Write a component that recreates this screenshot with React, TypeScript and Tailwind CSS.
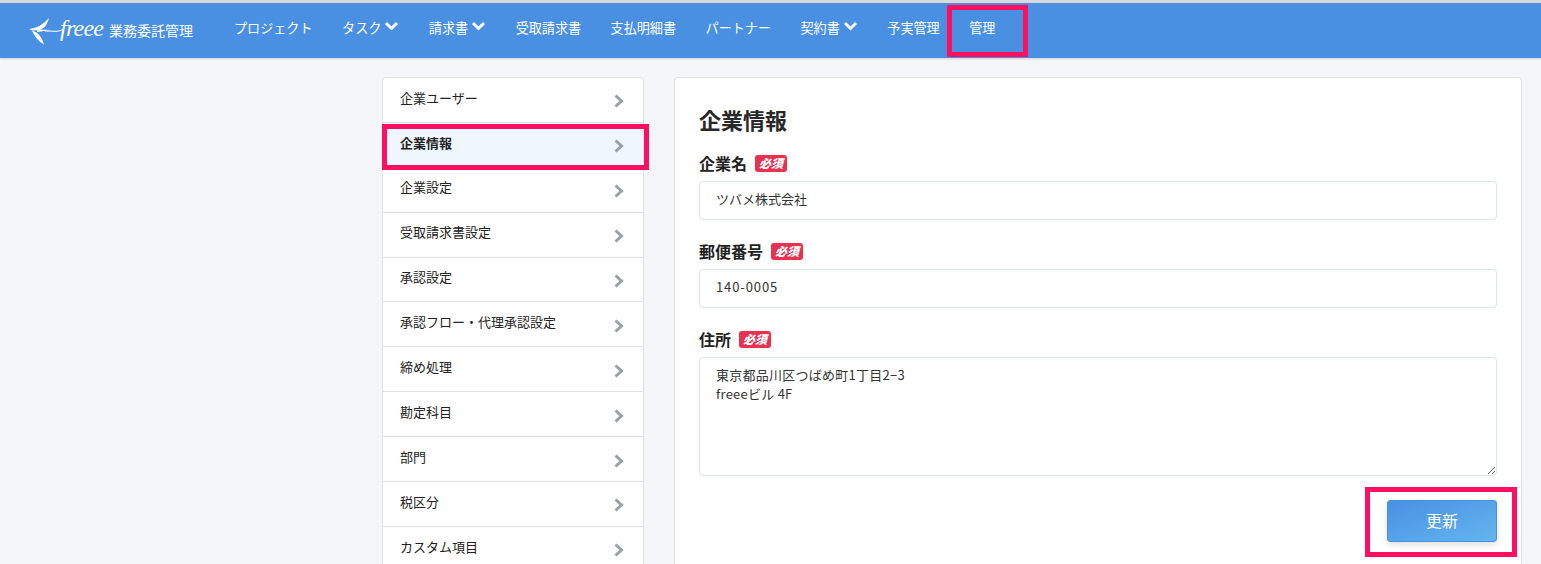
const font = { fontFamily: '"Noto Sans CJK JP", "Noto Sans", sans-serif' };

function Caret() {
  return (
    <svg width="15" height="10" viewBox="0 0 15 10" className="ml-[3px] mt-[-3px]">
      <path d="M2 2 L7.500 7.500 L13 2" fill="none" stroke="white" strokeWidth="3" />
    </svg>
  );
}

function Chevron() {
  return (
    <svg width="10" height="14" viewBox="0 0 10 14" className="mt-[3px]">
      <path d="M1.500 1.500 L7.500 7 L1.500 12.500" fill="none" stroke="#9aa0a6" strokeWidth="3" />
    </svg>
  );
}

function Logo() {
  return (
    <div className="flex items-center">
      <svg width="80" height="32" viewBox="0 0 80 32" className="block">
        <path d="M0 14 Q12 12.500 20 3 Q18 12 11 15 L3 15.500 Z" fill="white" />
        <path d="M3 15.500 Q12 18 15 29.500 Q7 25 3 15.500 Z" fill="white" />
        <path d="M8 14.500 L22 15 L8 17 Z" fill="white" />
        <path d="M16 16 L28 16.300 Q32 16.200 35 13.500" stroke="white" strokeWidth="1" fill="none" />
        <text x="31" y="20.500" fill="white" fontSize="24" fontStyle="italic" textLength="44" fontFamily="'Liberation Serif', serif">freee</text>
      </svg>
      <span className="text-[14px] text-white">業務委託管理</span>
    </div>
  );
}

function NavItem({ label, caret }: { label: string; caret?: boolean }) {
  return (
    <span className="flex items-center text-[13.100px] text-white whitespace-nowrap">
      {label}
      {caret && <Caret />}
    </span>
  );
}

function Required() {
  return (
    <span className="ml-[8px] inline-flex h-[17px] w-[32px] items-center justify-center rounded-[3px] bg-[#e8304f] text-[12px] font-black italic leading-none text-white">
      必須
    </span>
  );
}

const sideItems = ["企業ユーザー", "企業情報", "企業設定", "受取請求書設定", "承認設定", "承認フロー・代理承認設定", "締め処理", "勘定科目", "部門", "税区分", "カスタム項目"];

export default function App() {
  return (
    <div className="relative h-screen overflow-hidden bg-[#f5f6fa] text-[#222]" style={font}>
      <div className="h-[3px] bg-[#d9d9d9]" />
      <header className="flex h-[55px] items-center bg-[#4a90e2] pl-[29px] shadow-[0_1px_2px_rgba(0,0,0,0.15)]">
        <Logo />
        <nav className="ml-[41px] mt-[-5px] flex items-center gap-[29.500px]">
          <NavItem label="プロジェクト" />
          <NavItem label="タスク" caret />
          <NavItem label="請求書" caret />
          <NavItem label="受取請求書" />
          <NavItem label="支払明細書" />
          <NavItem label="パートナー" />
          <NavItem label="契約書" caret />
          <NavItem label="予実管理" />
          <NavItem label="管理" />
        </nav>
      </header>
      <main className="flex gap-[30px] pl-[382px] pt-[19px]">
        <aside className="w-[262px] shrink-0 overflow-hidden rounded-t-[4px] border border-b-0 border-[#dfe1e6] bg-white">
          {sideItems.map((s, i) => (
            <div key={s} className={`flex h-[44.900px] items-center justify-between border-b border-[#dfe1e6] pl-[17px] pr-[19px] text-[13px] ${i === 1 ? "bg-[#eff6fe] font-bold" : ""}`}>
              <span className="mt-[-5px]">{s}</span>
              <Chevron />
            </div>
          ))}
        </aside>
        <section className="h-[600px] w-[848px] shrink-0 rounded-t-[4px] border border-b-0 border-[#dfe1e6] bg-white px-[24px] pt-[26px]">
          <h1 className="text-[22px] font-bold leading-[30px] text-[#282828]">企業情報</h1>
          <div className="mt-[18px] flex h-[22px] items-center text-[16px] font-bold">企業名<Required /></div>
          <div className="mt-[7px] flex h-[39px] items-center rounded-[4px] border border-[#dce5e5] pb-[3px] pl-[16px] text-[13px] text-[#333]">ツバメ株式会社</div>
          <div className="mt-[20px] flex h-[22px] items-center text-[16px] font-bold">郵便番号<Required /></div>
          <div className="mt-[7px] flex h-[39px] items-center rounded-[4px] border border-[#dce5e5] pb-[3px] pl-[16px] text-[13px] tracking-[0.9px] text-[#333]">140-0005</div>
          <div className="mt-[20px] flex h-[22px] items-center text-[16px] font-bold">住所<Required /></div>
          <textarea
            readOnly
            className="mt-[7px] block h-[119px] w-full rounded-[4px] border border-[#dce5e5] px-[16px] py-[7px] text-[13px] leading-[19px] tracking-[0.250px] text-[#333] outline-none"
            defaultValue={"東京都品川区つばめ町1丁目2−3\nfreeeビル 4F"}
          />
          <div className="mt-[24px] flex justify-end">
            <button className="h-[42px] w-[110px] rounded-[3px] border border-[#4a90e2] bg-gradient-to-br from-[#4a90e2] to-[#64b5ef] pb-[3px] text-[16px] text-white shadow-[0_3px_6px_rgba(0,0,0,0.12)]">更新</button>
          </div>
        </section>
      </main>
      <div className="absolute left-[947px] top-[5px] h-[52px] w-[81px] border-[5px] border-[#ff0f5f]" />
      <div className="absolute left-[382px] top-[124px] h-[46px] w-[267px] border-[5px] border-[#ff0f5f]" />
      <div className="absolute left-[1365px] top-[487px] h-[70px] w-[152px] border-[5px] border-[#ff0f5f]" />
    </div>
  );
}
